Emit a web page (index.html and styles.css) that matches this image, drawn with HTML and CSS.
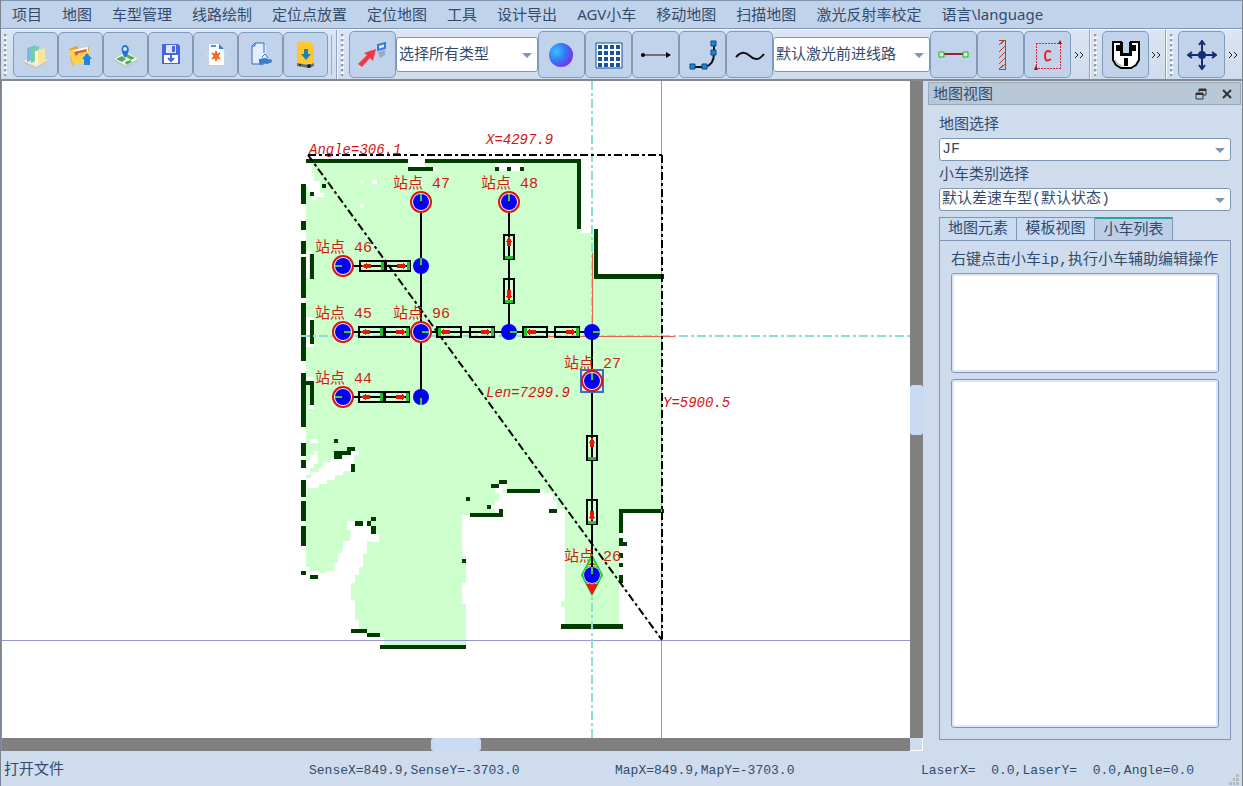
FILE: index.html
```html
<!DOCTYPE html>
<html lang="zh-CN">
<head>
<meta charset="utf-8">
<title>地图视图</title>
<link rel="stylesheet" href="styles.css">
</head>
<body>
<nav class="menubar">
  <button>项目</button><button>地图</button><button>车型管理</button><button>线路绘制</button><button>定位点放置</button><button>定位地图</button><button>工具</button><button>设计导出</button><button>AGV小车</button><button>移动地图</button><button>扫描地图</button><button>激光反射率校定</button><button>语言\language</button>
</nav>

<header class="toolbars">
  <div class="toolbar files">
    <i class="grip"></i>
    <button class="tool" aria-label="项目库"><svg width="28" height="28" viewBox="0 0 28 28"><path d="M1 20l14-6 11 5-12 7z" fill="#eeeae2"/><path d="M1 20v2l13 6v-2zM14 26v2l12-7v-2z" fill="#cfc8bc"/><path d="M5 7l9-3v14l-9 3z" fill="#74bdd8"/><path d="M9 8l8-3v14l-8 3z" fill="#72cfae"/><path d="M13 10l10-3v13l-9 4z" fill="#f5e69a"/><path d="M13 10l3 1v13l-3-2z" fill="#fff6c8"/></svg></button>
    <button class="tool" aria-label="打开文件"><svg width="28" height="28" viewBox="0 0 28 28"><path d="M2 8l8-3 2 3 10-2-1 13-16 5z" fill="#e9a31c"/><path d="M5 9l16-3v8l-14 4z" fill="#fff"/><path d="M6 11l14-3-1 4-12 4z" fill="#e4574a"/><path d="M2 9l4 15 12-3 5-11-11 2-3 3-3-6z" fill="#ffd04a"/><path d="M20 12l5 6h-2v6h-6v-6h-2z" fill="#2485dc"/></svg></button>
    <button class="tool" aria-label="地图"><svg width="28" height="28" viewBox="0 0 28 28"><path d="M2 18l12-7 12 7-12 7z" fill="#f0f7ec"/><path d="M4 18l6-3 4 3-4 3zM15 13l8 4-4 2-6-4zM13 21l5-2 2 2-6 3z" fill="#4fae58"/><path d="M2 18v2l12 7 12-7v-2l-12 7z" fill="#b8c8c2"/><path d="M13 17C8 10 9 4 13 4s6 6 0 13z" fill="#2079c5"/><circle cx="13" cy="8" r="2" fill="#c7e5ff"/></svg></button>
    <button class="tool" aria-label="保存"><svg width="28" height="28" viewBox="0 0 28 28"><path d="M5 3h16l2 2v18H5z" fill="#4a65dd"/><path d="M9 4h10v8H9z" fill="#dce6ff"/><path d="M15 5h3v6h-3z" fill="#4a65dd"/><path d="M7 14h14v8H7z" fill="#fff"/><path d="M14 14v5m-3-2l3 3 3-3" fill="none" stroke="#4a65dd" stroke-width="2"/></svg></button>
    <button class="tool" aria-label="配置文件"><svg width="28" height="28" viewBox="0 0 28 28"><path d="M7 3h10l5 5v16H7z" fill="#fff"/><path d="M17 3l5 5h-5z" fill="#297ee8"/><path d="M9 5h5" stroke="#4e91ee" stroke-width="2"/><path d="M14 10v10M10 12l8 6M10 18l8-6" stroke="#f06d2e" stroke-width="2"/><circle cx="14" cy="15" r="3" fill="#f06d2e"/><path d="M5 12q-2 3 1 5M23 12q2 3-1 5" stroke="#ddd" fill="none"/></svg></button>
    <button class="tool" aria-label="车辆文件"><svg width="28" height="28" viewBox="0 0 28 28"><path d="M5 5l3-3h9l2 3v8l-4 3v7H5z" fill="#e3edfc"/><path d="M17 23H5V5l3-3h9v10M8 2v3H5" fill="none" stroke="#2e6fbd" stroke-width="1"/><path d="M12 18l7-1 5 3-3 3-9-1z" fill="#3c7bc6"/><path d="M15 16l3-3 3 4" fill="#fff" stroke="#2e6fbd"/><circle cx="14" cy="22" r="2" fill="#4080ca"/><circle cx="23" cy="20" r="2" fill="#4080ca"/></svg></button>
    <button class="tool" aria-label="下载"><svg width="28" height="28" viewBox="0 0 28 28"><path d="M5 1h13l4 4v17l-17 1z" fill="#ffc72d"/><path d="M14 8v7" stroke="#1686b2" stroke-width="4"/><path d="M9 13l5 6 5-6z" fill="#1686b2"/><path d="M5 22l12 2 5-2v3l-5 2-12-2z" fill="#6d7072"/><circle cx="8" cy="24" r="1" fill="#222"/><circle cx="17" cy="25" r="2" fill="#222"/></svg></button>
    <i class="rule"></i>
  </div>

  <div class="toolbar draw">
    <i class="grip"></i>
    <button class="tool large" aria-label="选择"><svg width="30" height="30" viewBox="0 0 30 30"><path d="M0 24l9-9-3-2 12-4-3 12-3-3-8 9z" fill="#f23840"/><path d="M20 5l7-2v5l-7 2z" fill="#d9ebff" stroke="#2d7edb" stroke-width="2"/><path d="M20 12l7-2v5l-5 3z" fill="#9aa9bb"/></svg></button>
    <label class="combo types"><select aria-label="类型"><option>选择所有类型</option></select></label>
    <button class="tool large" aria-label="球体"><svg width="30" height="30" viewBox="0 0 30 30"><defs><radialGradient id="ball" cx=".3" cy=".35" r=".8"><stop offset="0" stop-color="#39c2ff"/><stop offset=".5" stop-color="#3478f5"/><stop offset="1" stop-color="#8b20e6"/></radialGradient></defs><circle cx="14" cy="15" r="12" fill="url(#ball)"/></svg></button>
    <button class="tool large" aria-label="网格"><svg width="30" height="30" viewBox="0 0 30 30"><path d="M2 3h26v25H2z" fill="#fff" stroke="#174b9a" stroke-width="1"/><path d="M4 7h22M4 13h22M4 19h22M4 25h22" stroke="#1752a7" stroke-width="4" stroke-dasharray="4 2"/></svg></button>
    <button class="tool large" aria-label="直线"><svg width="30" height="30" viewBox="0 0 30 30"><path d="M1 15h26" stroke="#111"/><circle cx="2" cy="15" r="2"/><path d="M25 12l5 3-5 3z"/></svg></button>
    <button class="tool large" aria-label="贝塞尔曲线"><svg width="30" height="30" viewBox="0 0 30 30"><path d="M5 27h12q9-2 9-14V4" fill="none" stroke="#111" stroke-width="2"/><path d="M2 24h5v5H2zM14 24h5v5h-5zM23 1h5v5h-5zM23 10h5v5h-5z" fill="#168bd4" stroke="#064682"/></svg></button>
    <button class="tool large" aria-label="曲线"><svg width="30" height="30" viewBox="0 0 30 30"><path d="M1 17q7-8 14-1t14-2" fill="none" stroke="#111" stroke-width="2"/></svg></button>
    <label class="combo routes"><select aria-label="线路"><option>默认激光前进线路</option></select></label>
    <button class="tool large" aria-label="连接线"><svg width="32" height="30" viewBox="0 0 32 30"><path d="M6 14h20" stroke="#a51b3b" stroke-width="2"/><path d="M1 12h5v5H1zM25 12h5v5h-5z" fill="#d6ebdc" stroke="#14bb1d"/></svg></button>
    <button class="tool large" aria-label="墙体"><svg width="30" height="32" viewBox="0 0 30 32" shape-rendering="crispEdges"><path d="M13 1h6v29h-6M19 1l-6 5M19 7l-6 6M19 13l-6 6M19 19l-6 6M19 25l-6 5" fill="none" stroke="#bb4020"/></svg></button>
    <button class="tool large" aria-label="区域"><svg width="30" height="30" viewBox="0 0 30 30"><path d="M3 3h24v25H3z" fill="none" stroke="#e5232f" stroke-dasharray="2 1" shape-rendering="crispEdges"/><path d="M27 0l2 4h-4zM3 25l2 5H1z" fill="#8c1616"/><path d="M18 12q-6-3-6 4t6 3" fill="none" stroke="#ed2026" stroke-width="2"/></svg></button>
    <button class="more" aria-label="更多绘制工具"><svg width="12" height="8" viewBox="0 0 12 8"><path d="M1 1l3 3-3 3M6 1l3 3-3 3" fill="none" stroke="#222" stroke-width="1"/></svg></button>
  </div>

  <div class="toolbar ports">
    <i class="grip"></i>
    <button class="tool large" aria-label="接口"><svg width="28" height="28" viewBox="0 0 28 28"><path d="M1 1h8v13h10V1h8v18l-3 5-5 3H9l-5-3-3-5z" fill="#fff" stroke="#000" stroke-width="2"/><path d="M9 1h2v11h6V1h2v13H9zM4 4h4v6H4zM20 4h4v6h-4zM12 17h4v8h-4z"/><path d="M3 19l3 4 5 2" fill="none" stroke="#aaa"/></svg></button>
    <button class="more" aria-label="更多接口"><svg width="12" height="8" viewBox="0 0 12 8"><path d="M1 1l3 3-3 3M6 1l3 3-3 3" fill="none" stroke="#222"/></svg></button>
  </div>

  <div class="toolbar move">
    <i class="grip"></i>
    <button class="tool large" aria-label="移动"><svg width="30" height="30" viewBox="0 0 30 30"><path d="M15 2v9M15 19v9M2 15h9M19 15h9M12 5l3-4 3 4M12 25l3 4 3-4M5 12l-4 3 4 3M25 12l4 3-4 3" fill="none" stroke="#132c75" stroke-width="2"/><circle cx="15" cy="15" r="4" fill="#132c75"/></svg></button>
    <button class="more" aria-label="更多移动工具"><svg width="12" height="8" viewBox="0 0 12 8"><path d="M1 1l3 3-3 3M6 1l3 3-3 3" fill="none" stroke="#222"/></svg></button>
  </div>
</header>

<main class="workspace">
  <section class="viewport">
    <svg class="map" viewBox="2 81 908 657" preserveAspectRatio="xMidYMid meet">
      <defs>
        <g id="dot"><circle r="8" fill="#0000fa"/><path d="M0 0v-8" stroke="#35cf4d" stroke-width="2"/><circle r="1"/></g>
        <g id="station"><circle r="10" fill="#fff" stroke="#db1414" stroke-width="2"/><use href="#dot"/></g>
        <g id="carA"><path d="M-12-5h24V5h-24z" fill="none" stroke="#000" stroke-width="2"/><path d="M-12 0h24" stroke="#000" stroke-width="2"/><path d="M-11 0l6-3v1h4v4h-4v1z" fill="#d81c10"/><path d="M10-4v8" stroke="#23b72c" stroke-width="3"/></g>
        <g id="carB"><path d="M-12-5h24V5h-24z" fill="none" stroke="#000" stroke-width="2"/><path d="M-12 0h12" stroke="#000" stroke-width="2"/><path d="M9 0l-4-3v1h-6v4h6v1z" fill="#f01208"/><path d="M10-4v8" stroke="#23c72c" stroke-width="3"/></g>
      </defs>
      <g class="crisp">
        <path class="floor" d="M306 163H581V233H594V278H661V511H619V624H565V601H561V607H565V509H557V501H553V493H499V509H495V515H462V556H466V583H462V596H462V604H466V645H384V637H380V633H359V620H355V600H351V583H355V575H359V567H363V554H367V541H371V534H376V526H355V521H347V530H351V541H343V553H338V563H334V571H326V573H306z"/>
        <path class="void" d="M306 163h6v10h2v8h6v12h4v4h-8v3h-4v-8h-4v-6h-6zM408 163h17v4h12v4h-29zM495 163h29v8h-29zM360 180h4v4h-4zM372 180h5v4h-5zM360 204h4v4h-4zM306 317h8v3h-4v24h4v3h-8zM306 377h8v4h-8zM308 405h6v4h-6zM306 251h5v3h-2v24h-3zM310 439h8v4h-8zM310 455h4v-4h4v13h-4v4h-4v7h-4v-14h4zM347 447h4v4h8v4h-5v9h-3v7h-8v4h-8v5h-8v4h-8v4h-12v7h-6v-13h4v-4h6v-6h8v-5h4v-5h8v-4h8v-4h10v-4h4zM359 521h12v13h8v8h-8v-4h-5v9h-4v14h-4v14h-4v8h-11v-12h-9v-6h8v-16h8v-16h8zM306 573v-6h4v4h10v2h5v7h-19zM491 505h4v-4h4v8h-8zM495 484h12v5h-4v4h-8zM540 489h4v4h-4z"/>
        <path class="wall" d="M306 159h102v4H306zM425 159h156v70h-4v-66H425zM408 167h25v4h-25zM495 167h4v4h-4zM507 167h4v4h-4zM520 167h4v4h-4zM594 229h4v45h66v5h-70zM301 184h5v20h-5zM301 221h5v9h-5zM301 241h5v13h-5zM301 257h5v41h-5zM301 303h5v58h-5zM301 373h5v8h8v24h-4v-20h-4v42h-5zM301 443h5v13h-5zM301 460h5v8h-5zM301 480h5v17h-5zM301 501h5v20h-5zM301 526h5v20h-5zM301 571h5v4h-5zM310 575h8v4h-8zM310 192h4v4h-4zM322 184h4v4h-4zM310 254h4v25h-4zM310 320h4v24h-4zM334 439h4v4h-4zM334 451h13v-4h8v4h-4v4h-9v4h-8zM351 464h4v8h-4zM355 521h8v5h-8zM367 521h4v5h-4zM371 517h5v4h-5zM371 526h5v8h-5zM466 497h4v4h-4zM487 505h4v4h-4zM470 513h29v-4h4v8h-33zM491 484h8v-4h8v4h-8v4h-8zM507 489h33v4h-33zM549 509h8v4h-8zM619 509h45v4h-41v20h-4zM619 538h4v4h4v4h-8zM619 553h4v5h-4zM619 563h4v4h-4zM619 575h4v8h-4zM561 624h62v5h-62zM462 559h4v4h-4zM351 629h16v4h-16zM367 633h13v4h-13zM380 645h86v4h-86z"/>
        <path class="axis" d="M661.5 81v657M2 640.5h908"/>
        <path class="guide" d="M592 81v657M301 336h609"/>
        <path class="trace" d="M592.5 253v83M525 336.500h150"/>
        <path class="link" d="M421 202v195M509 202v130M592 332v243M343 266h66M343 332h249M343 397h66"/>
      </g>
      <path class="measure" d="M308 155H662M662 155V640M308 155L662 640"/>

      <g class="crisp">
        <use href="#carA" x="372" y="266"/><use href="#carB" x="398" y="266"/>
        <use href="#carA" x="371" y="332"/><use href="#carB" x="397" y="332"/>
        <use href="#carB" transform="translate(449 332) rotate(180)"/><use href="#carB" x="482" y="332"/>
        <use href="#carB" transform="translate(535 332) rotate(180)"/><use href="#carB" x="567" y="332"/>
        <use href="#carA" x="371" y="397"/><use href="#carB" x="397" y="397"/>
        <use href="#carA" transform="translate(509 247) rotate(90)"/><use href="#carB" transform="translate(509 291) rotate(90)"/>
        <use href="#carA" transform="translate(592 448) rotate(90)"/><use href="#carB" transform="translate(592 512) rotate(90)"/>
      </g>

      <g class="mapLabel">
        <text x="393" y="188">站点 47</text><text x="481" y="188">站点 48</text>
        <text x="315" y="252">站点 46</text><text x="315" y="318">站点 45</text>
        <text x="393" y="318">站点 96</text><text x="315" y="383">站点 44</text>
        <text x="564" y="368">站点 27</text><text x="564" y="561">站点 26</text>
      </g>

      <use href="#station" x="421" y="202"/><use href="#station" x="509" y="202"/>
      <use href="#station" transform="translate(343 266) rotate(-90)"/><use href="#dot" x="421" y="266"/>
      <use href="#station" transform="translate(343 332) rotate(90)"/><use href="#station" transform="translate(421 332) rotate(90)"/>
      <use href="#dot" transform="translate(509 332) rotate(90)"/><use href="#dot" transform="translate(592 332) rotate(90)"/>
      <use href="#station" transform="translate(343 397) rotate(-90)"/><use href="#dot" transform="translate(421 397) rotate(180)"/>
      <path d="M581 370h22v22h-22z" fill="#dff5e6" stroke="#4169c8" stroke-width="2"/>
      <use href="#station" x="592" y="381"/>
      <path d="M592 556l10 19-10 19-10-19z" fill="#ccffcc" stroke="#21d421" stroke-width="2"/>
      <path d="M586 584h12l-6 11zM588 565h8l-4-3z" fill="#f51414"/>
      <circle cx="592" cy="575" r="9" fill="#fff" stroke="#39c832"/>
      <path class="link" d="M592 556v12"/>
      <use href="#dot" x="592" y="575"/>

      <g class="measureLabel">
        <text x="309" y="154">Angle=306.1</text><text x="486" y="144">X=4297.9</text>
        <text x="486" y="397">Len=7299.9</text><text x="663" y="407">Y=5900.5</text>
      </g>
    </svg>
    <div class="scroll vertical"><i class="thumb"></i></div>
    <div class="scroll horizontal"><i class="thumb"></i></div>
    <i class="corner"></i>
  </section>

  <aside class="dock">
    <div class="dockTitle">
      <h2>地图视图</h2>
      <button aria-label="浮动"><svg width="12" height="12" viewBox="0 0 12 12"><path d="M4 4V1h7v6H8" fill="none" stroke="#333"/><path d="M4 2h7" stroke="#333" stroke-width="2"/><path d="M1 5h7v6H1z" fill="none" stroke="#333"/><path d="M1 6h7" stroke="#333" stroke-width="2"/></svg></button>
      <button aria-label="关闭"><svg width="12" height="12" viewBox="0 0 12 12"><path d="M2 2l8 8M10 2l-8 8" stroke="#333" stroke-width="2"/></svg></button>
    </div>
    <div class="dockBody">
      <label class="caption" for="mapPick">地图选择</label>
      <div class="combo"><select id="mapPick"><option>JF</option></select></div>
      <label class="caption" for="carPick">小车类别选择</label>
      <div class="combo"><select id="carPick"><option>默认差速车型(默认状态)</option></select></div>
      <div class="tabs" role="tablist">
        <button role="tab">地图元素</button><button role="tab">模板视图</button><button role="tab" class="active" aria-selected="true">小车列表</button>
      </div>
      <div class="pane" role="tabpanel">
        <p>右键点击小车ip,执行小车辅助编辑操作</p>
        <div class="list short" role="listbox" aria-label="小车列表"></div>
        <div class="list" role="listbox" aria-label="小车详情"></div>
      </div>
    </div>
  </aside>
</main>

<footer class="status">
  <span class="message">打开文件</span>
  <span>SenseX=849.9,SenseY=-3703.0</span>
  <span>MapX=849.9,MapY=-3703.0</span>
  <span>LaserX=&nbsp; 0.0,LaserY=&nbsp; 0.0,Angle=0.0</span>
  <svg class="sizer" width="10" height="11" viewBox="0 0 10 11"><path d="M7 0h3v3H7zM4 4h2v3H4zM7 4h3v3H7zM0 8h3v3H0zM4 8h2v3H4zM7 8h3v3H7z" fill="#b6babf"/></svg>
</footer>
</body>
</html>
```
FILE: styles.css
```css
* { box-sizing: border-box; }

body {
  margin: 0;
  min-height: 100vh;
  display: flex;
  flex-direction: column;
  border: solid #7b8591;
  border-width: 0 1px;
  background: #cfdced;
  color: #324b6c;
  font: 15px/20px "Liberation Mono", "Noto Sans CJK SC", monospace;
}

button, select { font: inherit; color: inherit; }
button { border: 0; padding: 0; background: none; }

.menubar {
  display: flex;
  gap: 20px;
  height: 29px;
  padding: 0 11px;
  border-top: 1px solid #7f97b5;
  border-bottom: 1px solid #7f97b5;
  background: #c1d3eb;
  font-family: "Noto Sans", "Noto Sans CJK SC", sans-serif;
  white-space: nowrap;
}
.menubar button { padding-bottom: 2px; }

.toolbars {
  display: flex;
  height: 52px;
  border-top: 1px solid #f2f6fb;
  border-bottom: 2px solid #83898f;
  background: linear-gradient(#dbe5f3, #cfdced);
}
.toolbar {
  flex: none;
  display: flex;
  align-items: center;
  padding-left: 4px;
  border-right: 1px solid #8fa2ba;
  box-shadow: 1px 0 #f5f8fc;
}
.files { width: 336px; padding-left: 3px; }
.draw { width: 753px; }
.ports { width: 76px; }
.move { width: 76px; border: 0; box-shadow: none; }
.grip {
  flex: none;
  width: 3px;
  height: 42px;
  margin-right: 5px;
  background: radial-gradient(circle at 1px 1px, #8b9bad 1px, #f5f8fc 2px) 0 0 / 3px 5px;
}
.files .grip { margin-right: 6px; }
.rule { width: 1px; height: 40px; margin-left: 3px; background: #9aabc1; }
.tool {
  flex: none;
  display: grid;
  place-items: center;
  width: 45px;
  height: 45px;
  border: 1px solid #7f9abb;
  border-radius: 5px;
  background: #c1d3ea;
}
.tool.large { width: 47px; height: 47px; }
.more { flex: 1; display: grid; place-items: center; }

.combo {
  flex: none;
  position: relative;
  display: block;
}
.combo select {
  appearance: none;
  display: block;
  width: 100%;
  height: 23px;
  padding: 1px 20px 0 2px;
  border: 1px solid #7f97b5;
  border-radius: 3px;
  background: #fff;
}
.combo::after {
  content: "";
  position: absolute;
  right: 6px;
  top: calc(50% - 2px);
  border: solid transparent;
  border-width: 5px 5px 0;
  border-top-color: #7f97b5;
}
.toolbar .combo select { height: 35px; padding-top: 3px; }
.types { width: 142px; }
.routes { width: 157px; }

.workspace {
  flex: 1;
  display: grid;
  grid-template-columns: minmax(0, 1fr) 319px;
}
.viewport {
  display: grid;
  grid-template: minmax(0, 1fr) 13px / minmax(0, 1fr) 13px;
  border-left: 1px solid #8a9099;
}
.map {
  width: 100%;
  height: 100%;
  background: #fff;
}
.scroll { display: grid; background: #808080; }
.thumb { background: #c9dbf2; border-radius: 3px; }
.vertical { align-items: center; }
.vertical .thumb { height: 50px; }
.horizontal { justify-content: center; }
.horizontal .thumb { width: 50px; }
.corner { border: solid #fff; border-width: 0 1px 1px 0; background: #cfdced; }

.crisp { shape-rendering: crispEdges; }
.floor { fill: #ccffcc; }
.void { fill: #fff; }
.wall { fill: #003c00; }
.axis { stroke: #9696d2; }
.guide { stroke: #8cdcd8; stroke-width: 2; stroke-dasharray: 9 3 3 3; fill: none; }
.trace { stroke: #e66450; }
.link { stroke: #000; stroke-width: 2; }
.measure { fill: none; stroke: #000; stroke-width: 2; stroke-dasharray: 8 3 3 3; }
.mapLabel { fill: #cd1e14; }
.measureLabel { fill: #d21414; font-size: 14px; font-style: italic; }

.dock {
  display: flex;
  flex-direction: column;
  padding: 1px 1px 11px 5px;
}
.dockTitle {
  display: flex;
  align-items: center;
  gap: 14px;
  height: 23px;
  padding: 0 7px 0 4px;
  border: 1px solid #98a9bc;
  background: #b9c8d7;
}
.dockTitle h2 {
  flex: 1;
  margin: 0;
  padding-bottom: 2px;
  font: 15px/20px "Noto Sans CJK SC", sans-serif;
}
.dockTitle button { display: grid; }
.dockBody {
  flex: 1;
  display: flex;
  flex-direction: column;
  padding: 6px 10px 0 11px;
}
.caption { padding: 5px 0 2px; }
.tabs { display: flex; margin-top: 6px; }
.tabs button {
  width: 78px;
  height: 23px;
  padding-top: 2px;
  border: 1px solid #7f97b5;
  border-bottom: 0;
  background: #c9dcf2;
}
.tabs button + button { border-left: 0; }
.tabs .active { border-top: 2px solid #26a69a; background: #bdcfe6; }
.pane {
  flex: 1;
  display: flex;
  flex-direction: column;
  gap: 6px;
  padding: 10px 11px 11px;
  border: 1px solid #7f97b5;
}
.pane p { margin: 0 0 -4px; white-space: nowrap; }
.list {
  flex: 1;
  border: 1px solid #7f97b5;
  border-radius: 3px;
  background: #fff;
  box-shadow: inset 0 0 0 2px #dce7f5;
}
.list.short { flex: none; height: 100px; }

.status {
  position: relative;
  display: grid;
  grid-template-columns: 305px 306px 306px auto;
  align-items: center;
  height: 36px;
  padding: 3px 3px 0;
  font-size: 13px;
  white-space: nowrap;
}
.message { font-size: 15px; }
.sizer { position: absolute; right: 3px; bottom: 2px; }
```
